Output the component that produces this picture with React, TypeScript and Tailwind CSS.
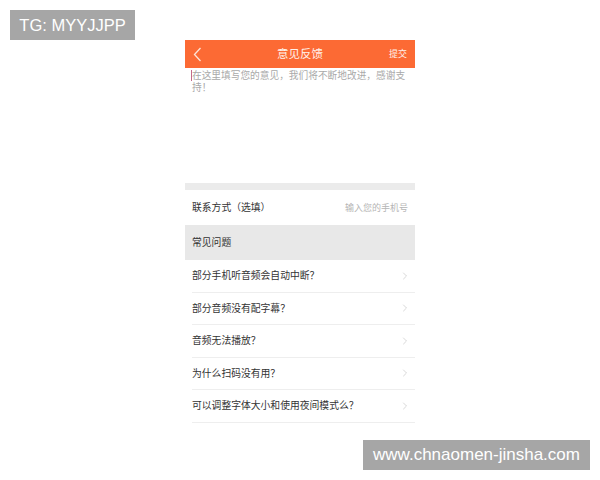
import { ChevronRight } from 'lucide-react';

const QUESTIONS = [
  '部分手机听音频会自动中断？',
  '部分音频没有配字幕？',
  '音频无法播放？',
  '为什么扫码没有用？',
  '可以调整字体大小和使用夜间模式么？',
];

const font = { fontFamily: '"Noto Sans CJK SC", "Liberation Sans", sans-serif' };
const latin = { fontFamily: '"Liberation Sans", sans-serif' };

export default function App() {
  return (
    <div className="relative flex h-[480px] w-[600px] justify-center bg-white pt-[40px]" style={font}>
      <div className="flex w-[230px] flex-col">
        {/* header */}
        <div className="relative flex h-[28px] items-center justify-center bg-[#fc6a34]">
          <svg className="absolute left-[8px] top-[7px]" width="9" height="15" viewBox="0 0 9 15" fill="none">
            <path d="M7.5 1L1.5 7.5L7.5 14" stroke="#fde3d6" strokeWidth="1.3" />
          </svg>
          <span className="text-[11.5px] text-[#fff1ea]">意见反馈</span>
          <span className="absolute right-[8px] text-[9px] text-[#fff1ea]">提交</span>
        </div>

        {/* textarea */}
        <div className="relative h-[115px] px-[7px] pt-[1px]">
          <div className="absolute left-[6px] top-[2px] h-[11px] w-px bg-[#c46a8a]" />
          <p className="text-[9.7px] leading-[12px] text-[#a9a9a9]">
            在这里填写您的意见，我们将不断地改进，感谢支持！
          </p>
        </div>

        <div className="h-[7px] bg-[#ebebeb]" />

        <div className="flex h-[35px] items-center justify-between px-[7px]">
          <span className="text-[9.8px] text-[#333]">联系方式（选填）</span>
          <span className="text-[9px] text-[#b5b5b5]">输入您的手机号</span>
        </div>

        <div className="flex h-[35px] items-center bg-[#e8e8e8] px-[7px]">
          <span className="text-[9.8px] text-[#333]">常见问题</span>
        </div>

        <div className="flex flex-col pl-[7px]">
          {QUESTIONS.map((q) => (
            <div key={q} className="flex h-[32.5px] items-center justify-between border-b border-[#eeeeee] pr-[4px]">
              <span className="text-[9.8px] text-[#333]">{q}</span>
              <ChevronRight size={12} strokeWidth={1.2} className="text-[#bdbdbd]" />
            </div>
          ))}
        </div>
      </div>

      <div className="absolute left-[10px] top-[10px] flex h-[30px] w-[125px] items-center justify-center bg-[#a6a6a6] text-[16.5px] text-white" style={latin}>
        TG: MYYJJPP
      </div>
      <div className="absolute left-[363px] top-[440px] flex h-[30px] w-[227px] items-center justify-center bg-[#a6a6a6] text-[17px] text-white" style={latin}>
        www.chnaomen-jinsha.com
      </div>
    </div>
  );
}
